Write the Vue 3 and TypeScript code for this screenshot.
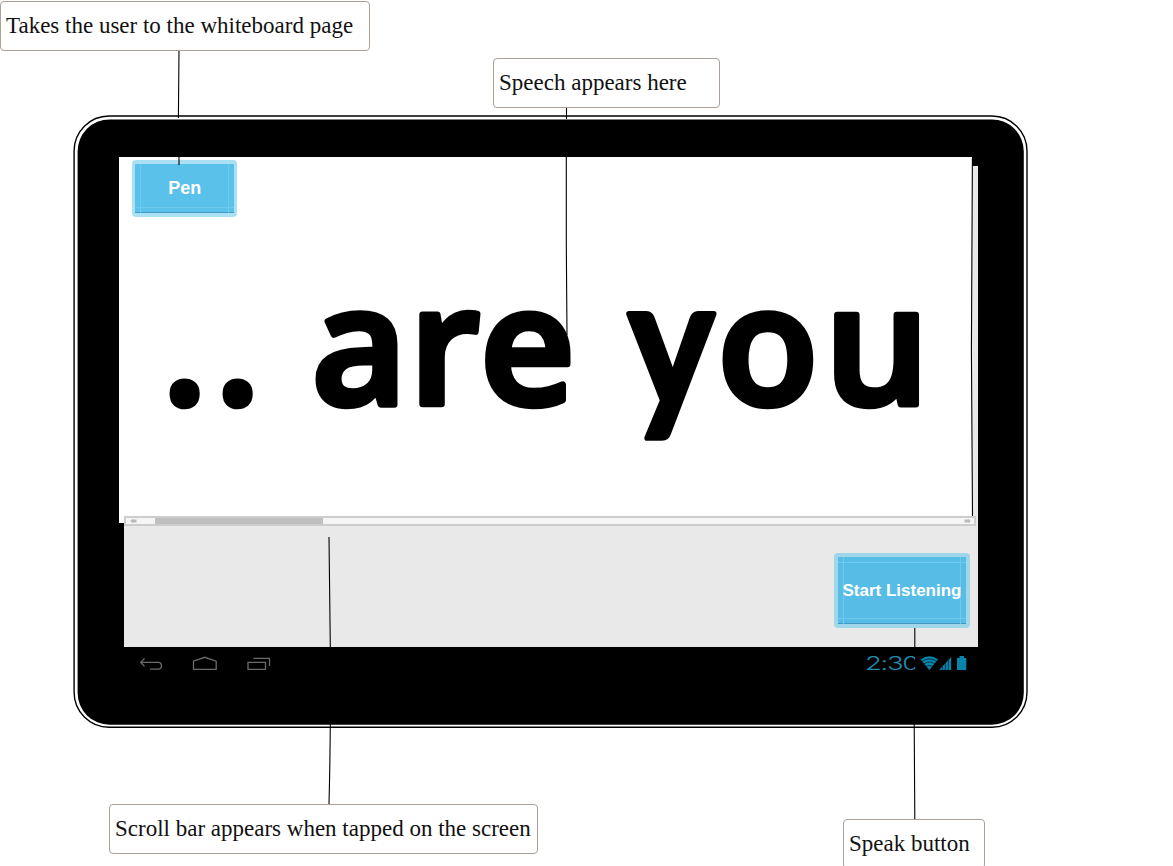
<script setup lang="ts">
interface Note {
  name: string
  text: string
}

const notes: Note[] = [
  { name: 'whiteboard', text: 'Takes the user to the whiteboard page' },
  { name: 'speech-note', text: 'Speech appears here' },
  { name: 'scroll', text: 'Scroll bar appears when tapped on the screen' },
  { name: 'speak', text: 'Speak button' },
]

const leaders: string[] = [
  'M179 51 L178.4 118 M179 157 V165',
  'M566.5 107 V119 M566.3 157 V245 L567 335',
  'M329 537 L330.3 647 M330.3 724 Q330 765 329 804',
  'M914.8 628 V647 M914.2 724 L914.8 819',
]
</script>

<template>
  <main class="stage">
    <section class="device">
      <svg class="frame" width="960" height="618" viewBox="70 113 960 618">
        <rect x="74.1" y="116" width="952.9" height="611.3" rx="35" fill="#fff" stroke="#000" stroke-width="1.4" />
        <rect x="77.6" y="119.4" width="946.2" height="605.4" rx="32" fill="#000" />
      </svg>
      <div class="screen">
        <div class="board">
          <button class="btn pen"><span>Pen</span></button>
          <svg class="speech" width="853" height="300" viewBox="119 223 853 300">
            <text y="404.2" x="162 215 271 311.5 409 480">.. are</text>
            <text class="tail" transform="translate(628.3 406.6) scale(0.93 1.04)">y</text>
            <text y="404.2" x="717.5 824.5">ou</text>
          </svg>
        </div>
        <div class="scrollbar">
          <svg width="8" height="6" viewBox="0 0 8 6"><path d="M0 3 3 .8V1.6H6.5V4.4H3V5.2Z" fill="#bbb" /></svg>
          <div class="track"><div class="thumb"></div></div>
          <svg width="8" height="6" viewBox="0 0 8 6"><path d="M8 3 5 .8V1.6H1.5V4.4H5V5.2Z" fill="#bbb" /></svg>
        </div>
        <div class="controls">
          <button class="btn listen"><span>Start Listening</span></button>
        </div>
        <nav class="navbar">
          <svg width="150" height="32" viewBox="0 0 150 32" fill="none" stroke="#6b6b6b" stroke-width="1.3">
            <path d="M20.5 11.5 16.7 15.4 20.5 19.3M17 15.4H35Q37.5 15.8 37.5 18.8T35 22.2H26" />
            <path d="M69.5 22.4V14.2L80.8 10.3 92.2 14.2V22.4Z" />
            <path d="M124 15.3H141.5V22.3H124ZM129.5 11.4H145.5V19" />
          </svg>
          <svg class="status" width="114" height="32" viewBox="864 647 114 32">
            <defs>
              <clipPath id="clock"><rect x="864" y="650" width="51" height="25" /></clipPath>
            </defs>
            <g clip-path="url(#clock)">
              <text transform="translate(865 669.8) scale(1.49 1)">2:30</text>
            </g>
            <g fill="#0784ac">
              <path d="M920.5 659.4Q929.3 653.2 938 659.4L929.3 670Z" />
              <path d="M939 670 951.2 657V670Z" />
              <path d="M957 658H959.5V656H964V658H966.3V670H957Z" />
            </g>
            <path d="M921.5 661.5Q929.3 656.3 937 661.5M923.6 664Q929.3 660 935 664M925.8 666.6Q929.3 664 932.8 666.6" fill="none" stroke="#000" stroke-width="0.6" />
            <path d="M942.3 656V671M945.3 656V671M948.3 656V671" stroke="#000" stroke-width="0.6" />
          </svg>
        </nav>
      </div>
    </section>

    <svg class="overlay" width="1173" height="866" viewBox="0 0 1173 866" fill="none" stroke="#000">
      <path d="M972.4 158 L971.4 350 L972.5 516" stroke-width="1.1" />
      <path v-for="path in leaders" :key="path" :d="path" stroke-width="1.1" />
    </svg>

    <div v-for="note in notes" :key="note.name" class="note" :class="note.name">{{ note.text }}</div>
  </main>
</template>

<style>
body {
  background: #fff;
}
</style>

<style scoped>
.stage {
  position: relative;
  width: 1173px;
  height: 866px;
  overflow: hidden;
  font-family: "Liberation Sans", Arial, sans-serif;
}
.device {
  position: absolute;
  left: 70px;
  top: 113px;
  width: 960px;
  height: 618px;
}
.frame {
  position: absolute;
  inset: 0;
}
.screen {
  position: relative;
  display: flex;
  flex-direction: column;
  box-sizing: border-box;
  width: 854px;
  margin-left: 54px;
  padding-top: 44px;
}
.screen::before {
  content: "";
  position: absolute;
  right: 0;
  top: 53px;
  width: 6px;
  height: 360px;
  background: #e9e9e9;
}
.board {
  position: relative;
  box-sizing: border-box;
  width: 853px;
  height: 366px;
  margin-left: -4.7px;
  padding: 3px 0 0 12.5px;
  background: #fff;
}
.speech {
  position: absolute;
  left: 0;
  bottom: 0;
}
.speech text {
  font: 600 165px "Open Sans", "Noto Sans", sans-serif;
  fill: #000;
  stroke: #000;
  stroke-width: 6.5px;
  stroke-linejoin: round;
  white-space: pre;
}
.speech .tail {
  font: 700 175px Lato, sans-serif;
  stroke-width: 5.5px;
}
.btn {
  position: relative;
  display: flex;
  align-items: center;
  justify-content: center;
  box-sizing: border-box;
  padding: 0;
  border: 4px solid #a9e0f4;
  border-radius: 4px;
  background: #5ac1ea;
  box-shadow: inset 0 -1px #4298be;
  color: #fff;
  font: 700 17px "Liberation Sans", Arial, sans-serif;
  white-space: nowrap;
}
.btn::before,
.btn::after {
  content: "";
  position: absolute;
  border: 0 solid #70caed;
}
.btn::before {
  inset: 0 5px;
  border-width: 0 1px;
}
.btn::after {
  inset: 5px 0;
  border-width: 1px 0;
}
.btn span {
  position: relative;
  z-index: 1;
}
.pen {
  width: 105px;
  height: 57px;
  border-width: 4px 3px;
}
.pen::after {
  border-top-width: 0;
}
.pen span {
  padding-left: 1px;
  font-size: 18px;
}
.listen {
  width: 136px;
  height: 75px;
  border-color: #9fd6e9;
  background: #57bde6;
}
.scrollbar {
  position: relative;
  z-index: 1;
  display: flex;
  align-items: center;
  box-sizing: border-box;
  width: 852px;
  height: 10px;
  margin-top: -7px;
  padding: 0 3px 0 4px;
  border: 2px solid #cdcdcd;
  background: #f5f5f5;
}
.track {
  flex: 1;
  height: 6px;
  margin: 0 8px 0 17px;
}
.thumb {
  width: 168px;
  height: 6px;
  background: #bfbfbf;
}
.controls {
  display: flex;
  justify-content: flex-end;
  box-sizing: border-box;
  height: 124px;
  margin-top: -3px;
  padding: 30px 8px 0 0;
  background: #e9e9e9;
}
.navbar {
  display: flex;
  height: 32px;
  background: #000;
}
.status {
  margin-left: auto;
}
.status text {
  font: 300 18.5px Inter, "Liberation Sans", sans-serif;
  letter-spacing: -0.9px;
  fill: #238ab0;
}
.overlay {
  position: absolute;
  inset: 0;
}
.note {
  position: absolute;
  box-sizing: border-box;
  height: 50px;
  padding-left: 5px;
  border: 1px solid #aaa096;
  border-radius: 4px;
  background: #fff;
  color: #111;
  font: 23px/48px "Liberation Serif", "Times New Roman", serif;
  white-space: nowrap;
}
.whiteboard {
  left: 0;
  top: 1px;
  width: 370px;
}
.speech-note {
  left: 493px;
  top: 58px;
  width: 227px;
}
.scroll {
  left: 109px;
  top: 804px;
  width: 429px;
}
.speak {
  left: 843px;
  top: 819px;
  width: 142px;
}
</style>
